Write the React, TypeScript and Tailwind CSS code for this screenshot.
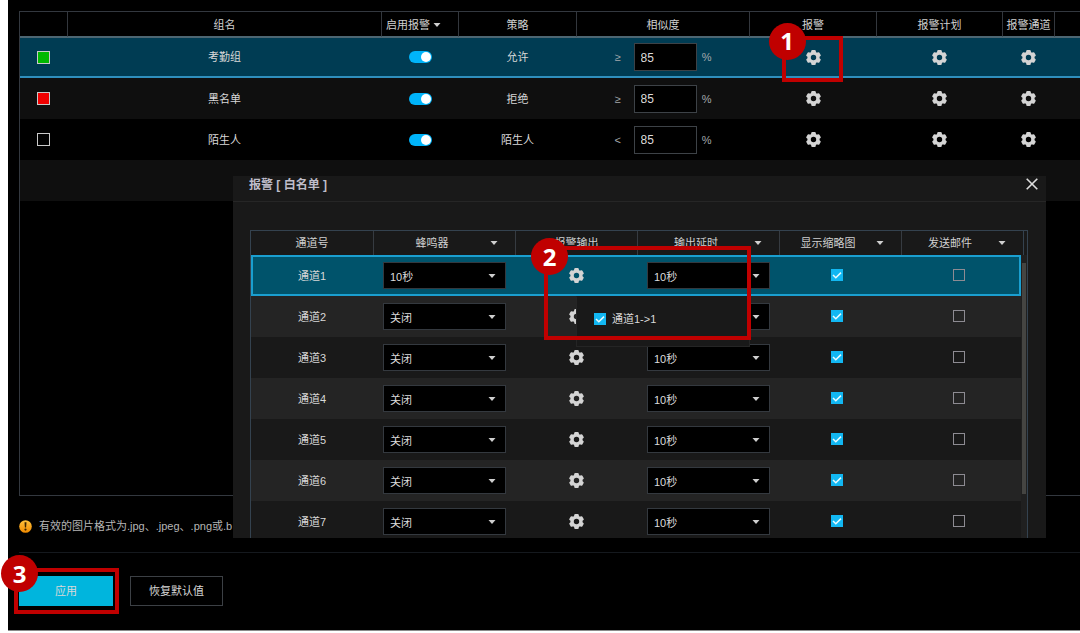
import { useState } from 'react'

interface Group {
  name: string
  swatch: string
  policy: string
  sign: string
  similarity: string
}

interface Channel {
  name: string
  buzzer: string
  delay: string
}

const groups: Group[] = [
  { name: '考勤组', swatch: 'bg-[#00b900]', policy: '允许', sign: '≥', similarity: '85' },
  { name: '黑名单', swatch: 'bg-[#f00000]', policy: '拒绝', sign: '≥', similarity: '85' },
  { name: '陌生人', swatch: 'bg-transparent', policy: '陌生人', sign: '<', similarity: '85' },
]

const channels: Channel[] = [
  { name: '通道1', buzzer: '10秒', delay: '10秒' },
  { name: '通道2', buzzer: '关闭', delay: '10秒' },
  { name: '通道3', buzzer: '关闭', delay: '10秒' },
  { name: '通道4', buzzer: '关闭', delay: '10秒' },
  { name: '通道5', buzzer: '关闭', delay: '10秒' },
  { name: '通道6', buzzer: '关闭', delay: '10秒' },
  { name: '通道7', buzzer: '关闭', delay: '10秒' },
]

const teeth = [0, 60, 120, 180, 240, 300]

function Caret() {
  return (
    <svg width="8" height="4" viewBox="0 0 8 4" className="shrink-0 fill-[#cfcfcf]" aria-hidden="true">
      <path d="M0.5 0h7L4 4z" />
    </svg>
  )
}

function Gear({ label }: { label: string }) {
  return (
    <button type="button" aria-label={label} className="block">
      <svg width="15" height="15" viewBox="0 0 15 15" className="fill-[#d4d4d4]">
        <circle cx="7.5" cy="7.5" r="4.4" fill="none" stroke="#d4d4d4" strokeWidth="3.4" />
        {teeth.map(angle => (
          <rect key={angle} x="5.2" y="0" width="4.6" height="3.6" rx="1.2" transform={`rotate(${angle} 7.5 7.5)`} />
        ))}
      </svg>
    </button>
  )
}

function Toggle({ label }: { label: string }) {
  return (
    <input
      type="checkbox"
      role="switch"
      aria-label={label}
      defaultChecked
      className="block h-3 w-[23px] appearance-none rounded-full bg-[#5a5a5a] p-px before:block before:size-[10px] before:rounded-full before:bg-white checked:bg-[#00b4fa] checked:before:ml-[11px]"
    />
  )
}

function Check({ label, id, checked = false }: { label?: string; id?: string; checked?: boolean }) {
  return (
    <span className="grid size-3 place-items-center">
      <input
        type="checkbox"
        id={id}
        aria-label={label}
        defaultChecked={checked}
        className="peer col-start-1 row-start-1 size-3 appearance-none border border-[#8d8b92] checked:border-[#12b7f2] checked:bg-[#12b7f2]"
      />
      <svg
        viewBox="0 0 12 12"
        className="pointer-events-none invisible col-start-1 row-start-1 size-3 fill-none stroke-[#e8fbff] stroke-[1.5] peer-checked:visible"
        aria-hidden="true"
      >
        <path d="M2 6l2.8 2.8L10 3.6" />
      </svg>
    </span>
  )
}

function DropDown({ label, value, options }: { label: string; value: string; options: string[] }) {
  return (
    <div className="relative ml-[9px] w-[123px]">
      <select
        aria-label={label}
        defaultValue={value}
        className="block h-[27px] w-full appearance-none border border-[#34393f] bg-black pt-[2px] pl-[6px] text-[#dcdcdc]"
      >
        {options.map(option => (
          <option key={option}>{option}</option>
        ))}
      </select>
      <span className="pointer-events-none absolute inset-y-0 right-[10px] flex items-center">
        <Caret />
      </span>
    </div>
  )
}

function SortLabel({ text }: { text: string }) {
  return (
    <div className="flex items-center">
      <span className="flex-1">{text}</span>
      <span className="w-[25px]">
        <Caret />
      </span>
    </div>
  )
}

// numbered red frame that marks one step of the guide
function Step({ number, className, badge }: { number: number; className: string; badge: string }) {
  return (
    <div className={`pointer-events-none absolute border-4 border-[#c00000] ${className}`}>
      <span className={`absolute -left-[17px] flex size-[37px] items-center justify-center rounded-full bg-[#c00000] font-['Open_Sans',sans-serif] text-2xl font-bold text-white ${badge}`}>
        {number}
      </span>
    </div>
  )
}

function GroupTable() {
  const head = 'h-[25px] border-r border-b border-b-[#4d6672] border-r-[#33373d] pt-px font-normal text-[#d0d0d0]'
  return (
    <div className="h-[485px] border-t border-b border-l border-[#33383f]">
      <table className="w-full table-fixed border-separate border-spacing-0 text-center">
        <colgroup>
          <col className="w-12" />
          <col />
          <col className="w-[77px]" />
          <col className="w-[118px]" />
          <col className="w-[173px]" />
          <col className="w-[127px]" />
          <col className="w-[126px]" />
          <col className="w-[52px]" />
          <col className="w-[25px]" />
        </colgroup>
        <thead>
          <tr>
            <td className={head}></td>
            <th className={head}>组名</th>
            <th className={head}>
              <div className="flex items-center gap-[3px] pl-1 whitespace-nowrap">
                启用报警
                <Caret />
              </div>
            </th>
            <th className={head}>策略</th>
            <th className={head}>相似度</th>
            <th className={head}>报警</th>
            <th className={head}>报警计划</th>
            <th className={head}>报警通道</th>
            <td className="h-[25px] border-b border-[#4d6672]"></td>
          </tr>
        </thead>
        <tbody>
          {groups.map((group, idx) => {
            const cell = idx === 0 ? 'h-[41px] border-t border-b-2 border-t-[#4d6672] border-b-[#2f8fbd] pr-px' : 'h-[41px] pr-px'
            return (
              <tr key={group.name} className={idx === 0 ? 'bg-[#003c53]' : idx % 2 ? 'bg-[#0f0f0f]' : 'bg-black'}>
                <td className={cell}>
                  <span className={`mx-auto block size-[13px] border border-[#c9c9c9] ${group.swatch}`}></span>
                </td>
                <td className={cell}>{group.name}</td>
                <td className={cell}>
                  <div className="flex justify-center">
                    <Toggle label={`${group.name} 启用报警`} />
                  </div>
                </td>
                <td className={cell}>{group.policy}</td>
                <td className={cell}>
                  <div className="flex items-center justify-center text-[#a5a9ac]">
                    <span className="w-[19px] text-left">{group.sign}</span>
                    <input
                      type="text"
                      aria-label={`${group.name} 相似度`}
                      defaultValue={group.similarity}
                      className="h-7 w-[63px] border border-[#3d4247] bg-black px-[6px] pt-px text-xs text-[#dcdcdc]"
                    />
                    <span className="w-[15px] text-right">%</span>
                  </div>
                </td>
                <td className={cell}>
                  <div className="flex justify-center">
                    <div className="relative">
                      <Gear label={`${group.name} 报警`} />
                      {idx === 0 && <Step number={1} className="-top-[14px] -left-6 h-[46px] w-[61px]" badge="-top-[17px]" />}
                    </div>
                  </div>
                </td>
                <td className={cell}>
                  <div className="flex justify-center">
                    <Gear label={`${group.name} 报警计划`} />
                  </div>
                </td>
                <td className={cell}>
                  <div className="flex justify-center">
                    <Gear label={`${group.name} 报警通道`} />
                  </div>
                </td>
                <td className={cell}></td>
              </tr>
            )
          })}
          <tr className="bg-[#0f0f0f]">
            <td colSpan={9} className="h-[41px]"></td>
          </tr>
        </tbody>
      </table>
    </div>
  )
}

function ChannelTable() {
  const head = 'h-6 border-r border-[#363b41] font-normal text-[#d0d0d0]'
  return (
    <table className="w-full table-fixed border-separate border-spacing-0 border-t border-r border-l border-[#34424f] text-center">
      <colgroup>
        <col />
        <col className="w-[142px]" />
        <col className="w-[122px]" />
        <col className="w-[142px]" />
        <col className="w-[122px]" />
        <col className="w-[119px]" />
        <col className="w-[6px]" />
      </colgroup>
      <thead>
        <tr>
          <th className={head}>通道号</th>
          <th className={head}><SortLabel text="蜂鸣器" /></th>
          <th className={head}>报警输出</th>
          <th className={head}><SortLabel text="输出延时" /></th>
          <th className={head}><SortLabel text="显示缩略图" /></th>
          <th colSpan={2} className="h-6 font-normal text-[#d0d0d0]">
            <div className="mr-[3px] flex h-6 flex-col justify-center border-r border-[#34424f]">
              <SortLabel text="发送邮件" />
            </div>
          </th>
        </tr>
      </thead>
      <tbody>
        {channels.map((channel, idx) => {
          const cell = idx === 0 ? 'h-[41px] border-y-2 border-[#1a9fd0]' : 'h-[41px]'
          return (
            <tr key={channel.name} className={idx === 0 ? 'bg-[#00536b]' : idx % 2 ? 'bg-[#242424]' : 'bg-[#191919]'}>
              <td className={idx === 0 ? 'h-[41px] border-y-2 border-l-2 border-[#1a9fd0] pr-[3px]' : 'h-[41px] pr-px'}>{channel.name}</td>
              <td className={cell}>
                <DropDown label={`${channel.name} 蜂鸣器`} value={channel.buzzer} options={['关闭', '10秒']} />
              </td>
              <td className={cell}>
                <div className="flex justify-center pr-[2px]">
                  <Gear label={`${channel.name} 报警输出`} />
                </div>
              </td>
              <td className={cell}>
                <DropDown label={`${channel.name} 输出延时`} value={channel.delay} options={['关闭', '10秒']} />
              </td>
              <td className={cell}>
                <div className="flex justify-center pr-2 pb-px">
                  <Check label={`${channel.name} 显示缩略图`} checked />
                </div>
              </td>
              <td className={idx === 0 ? 'h-[41px] border-y-2 border-r-2 border-[#1a9fd0] pl-[2px]' : 'h-[41px]'}>
                <div className="flex justify-center pr-[5px] pb-px">
                  <Check label={`${channel.name} 发送邮件`} />
                </div>
              </td>
              {idx === 0 && (
                <td rowSpan={channels.length} className="bg-[#202020] pt-2 align-top">
                  <div className="mx-px h-[231px] bg-[#454542]"></div>
                </td>
              )}
            </tr>
          )
        })}
      </tbody>
    </table>
  )
}

function AlarmDialog({ onClose }: { onClose: () => void }) {
  return (
    <div
      role="dialog"
      aria-labelledby="alarm-title"
      className="absolute top-44 right-[34px] left-[225px] h-[362px] overflow-hidden bg-[#191919]"
    >
      <div className="flex h-[26px] items-start justify-between border-b border-[#262626] pt-px pr-2 pl-4">
        <h2 id="alarm-title" className="text-xs leading-4 font-bold text-[#bfbdca]">报警 [ 白名单 ]</h2>
        <button type="button" aria-label="关闭" onClick={onClose} className="mt-px">
          <svg width="12" height="12" viewBox="0 0 12 12" className="stroke-[#dedede] stroke-[1.6]">
            <path d="M0.7 0.7l10.6 10.6M11.3 0.7L0.7 11.3" />
          </svg>
        </button>
      </div>
      <div className="pt-7 pr-[18px] pl-[17px]">
        <ChannelTable />
      </div>
      <div className="absolute top-[120px] left-[343px] flex h-[51px] w-[174px] items-center gap-[6px] border border-[#252525] border-t-transparent bg-[#191919] pb-[5px] pl-[17px]">
        <Check id="output-1" checked />
        <label htmlFor="output-1">通道1-&gt;1</label>
      </div>
      <Step number={2} className="top-[70px] left-[311px] h-[94px] w-[207px]" badge="-top-3" />
    </div>
  )
}

export default function App() {
  const [dialogOpen, setDialogOpen] = useState(true)

  return (
    <main className="relative ml-2 border-b border-[#8a8a8a] bg-black pt-[11px] pl-[11px] font-['Liberation_Sans','Noto_Sans_CJK_SC',sans-serif] text-[11px] leading-4 text-[#d8d8d8]">
      <GroupTable />
      <div className="flex h-[57px] items-center gap-[7px] border-b border-[#15191e] pt-1 text-[#b5b5b5]">
        <svg width="13" height="13" viewBox="0 0 13 13" aria-hidden="true">
          <defs>
            <linearGradient id="warn" x1="0" y1="0" x2="0" y2="1">
              <stop offset="0" stopColor="#ffc23c" />
              <stop offset="1" stopColor="#f08a00" />
            </linearGradient>
          </defs>
          <circle cx="6.5" cy="6.5" r="6.3" fill="url(#warn)" />
          <path d="M5.5 2.3h2l-.4 5.2H5.9z" fill="#3a2400" />
          <circle cx="6.5" cy="9.6" r="1.1" fill="#3a2400" />
        </svg>
        <p className="whitespace-nowrap">有效的图片格式为.jpg、.jpeg、.png或.b</p>
      </div>
      <div className="flex gap-[17px] pt-[23px] pb-6">
        <div className="relative">
          <button type="button" className="h-[30px] w-[94px] bg-[#00b5dd]">应用</button>
          <Step number={3} className="-top-2 -right-[6px] -left-[5px] h-[46px]" badge="-top-[17px]" />
        </div>
        <button type="button" className="h-[30px] w-[93px] border border-[#3c4045]">恢复默认值</button>
      </div>
      {dialogOpen && <AlarmDialog onClose={() => setDialogOpen(false)} />}
    </main>
  )
}
